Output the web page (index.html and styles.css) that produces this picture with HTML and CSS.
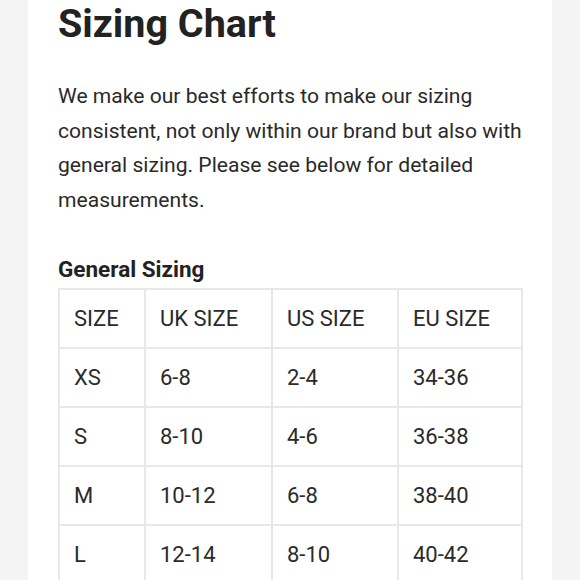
FILE: index.html
```html
<!DOCTYPE html>
<html>
<head>
<meta charset="utf-8">
<link rel="stylesheet" href="styles.css">
</head>
<body>
<div class="card">
  <h1 class="title">Sizing Chart</h1>
  <p class="intro">We make our best efforts to make our sizing consistent, not only within our brand but also with general sizing. Please see below for detailed measurements.</p>
  <h2 class="subtitle">General Sizing</h2>
  <table class="chart">
    <tr><td>SIZE</td><td>UK SIZE</td><td>US SIZE</td><td>EU SIZE</td></tr>
    <tr><td>XS</td><td>6-8</td><td>2-4</td><td>34-36</td></tr>
    <tr><td>S</td><td>8-10</td><td>4-6</td><td>36-38</td></tr>
    <tr><td>M</td><td>10-12</td><td>6-8</td><td>38-40</td></tr>
    <tr><td>L</td><td>12-14</td><td>8-10</td><td>40-42</td></tr>
  </table>
</div>
</body>
</html>
```
FILE: styles.css
```css
html, body {
  margin: 0;
  padding: 0;
  background: #f4f4f4;
  height: 580px;
  overflow: hidden;
}
body {
  font-family: Roboto, "Noto Sans", sans-serif;
  color: #222;
}
.card {
  margin: 0 28px;
  background: #fff;
  padding: 0 30px 0 30px;
  height: 580px;
  box-sizing: border-box;
}
.title {
  margin: 0;
  padding-top: 0;
  font-size: 39.5px;
  font-weight: 700;
  line-height: 48px;
  color: #222;
}
.intro {
  margin: 31px 0 0 0;
  font-size: 21.1px;
  line-height: 34.5px;
  color: #2a2a2a;
}
.subtitle {
  margin: 38px 0 0 0;
  font-size: 22.5px;
  font-weight: 700;
  line-height: 28px;
}
.chart {
  margin-top: 5px;
  border-collapse: collapse;
  width: 465px;
  font-size: 22px;
  color: #2a2a2a;
}
.chart td {
  border: 2px solid #e8e8e8;
  height: 57px;
  padding: 0 0 0 14px;
  vertical-align: middle;
}
.chart td:nth-child(1) { width: 70px; }
.chart td:nth-child(2) { width: 111px; }
.chart td:nth-child(3) { width: 110px; }
```
